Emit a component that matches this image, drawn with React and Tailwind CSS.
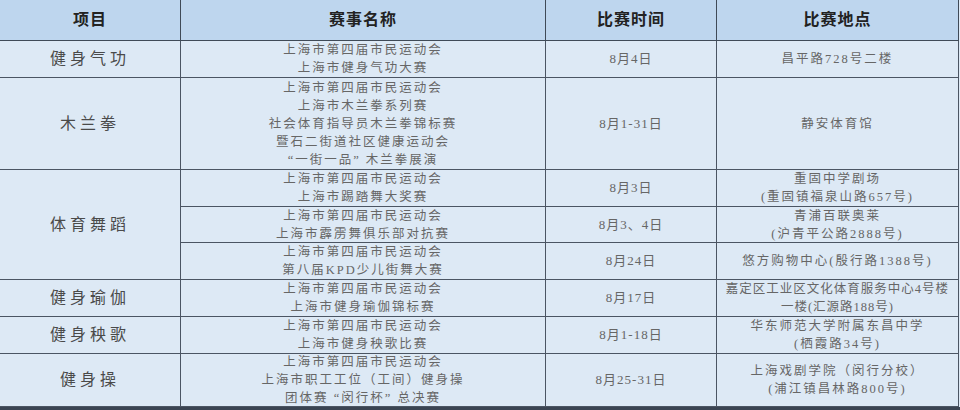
const font = { fontFamily: '"Liberation Serif", "Noto Sans CJK SC", serif' };

const rows = [
  { item: "健身气功", name: ["上海市第四届市民运动会", "上海市健身气功大赛"], date: "8月4日", place: ["昌平路728号二楼"], h: "h-[37px]" },
  {
    item: "木兰拳",
    name: ["上海市第四届市民运动会", "上海市木兰拳系列赛", "社会体育指导员木兰拳锦标赛", "暨石二街道社区健康运动会", "“一街一品” 木兰拳展演"],
    date: "8月1-31日",
    place: ["静安体育馆"],
    h: "h-[92px]",
  },
];

const dance = [
  { name: ["上海市第四届市民运动会", "上海市踢踏舞大奖赛"], date: "8月3日", place: ["重固中学剧场", "(重固镇福泉山路657号)"], h: "h-[37px]" },
  { name: ["上海市第四届市民运动会", "上海市霹雳舞俱乐部对抗赛"], date: "8月3、4日", place: ["青浦百联奥莱", "(沪青平公路2888号)"], h: "h-[36px]" },
  { name: ["上海市第四届市民运动会", "第八届KPD少儿街舞大赛"], date: "8月24日", place: ["悠方购物中心(殷行路1388号)"], h: "h-[37px]" },
];

const rest = [
  { item: "健身瑜伽", name: ["上海市第四届市民运动会", "上海市健身瑜伽锦标赛"], date: "8月17日", place: ["嘉定区工业区文化体育服务中心4号楼", "一楼(汇源路188号)"], h: "h-[37px]", tight: true },
  { item: "健身秧歌", name: ["上海市第四届市民运动会", "上海市健身秧歌比赛"], date: "8月1-18日", place: ["华东师范大学附属东昌中学", "(栖霞路34号)"], h: "h-[37px]" },
  { item: "健身操", name: ["上海市第四届市民运动会", "上海市职工工位（工间）健身操", "团体赛 “闵行杯” 总决赛"], date: "8月25-31日", place: ["上海戏剧学院（闵行分校）", "(浦江镇昌林路800号)"], h: "h-[53px]" },
];

function Lines({ items, tight }) {
  return (
    <div className={`flex flex-col items-center text-[12.5px] leading-[18px] text-[#666] ${tight ? "tracking-[1px]" : "tracking-[2px]"}`}>
      {items.map((t, i) => (
        <span key={i} className="whitespace-nowrap">{t}</span>
      ))}
    </div>
  );
}

const cell = "flex items-center justify-center border-r border-b border-[#4b5563]";
const itemCls = "text-[16px] tracking-[4px] text-[#4a4a4a]";

function Row({ r, withItem = true }) {
  return (
    <>
      {withItem && <div className={`${cell} ${r.h} ${itemCls}`}>{r.item}</div>}
      <div className={`${cell} ${r.h}`}><Lines items={r.name} /></div>
      <div className={`${cell} ${r.h} text-[13px] tracking-[1px] text-[#666]`}>{r.date}</div>
      <div className={`${cell} ${r.h}`}><Lines items={r.place} tight={r.tight} /></div>
    </>
  );
}

export default function App() {
  return (
    <div className="w-[960px] h-[410px] bg-[#dde9f5] overflow-hidden" style={font}>
      <div className="grid grid-cols-[181px_365px_171px_242px] border-b-[3px] border-[#3a4452]">
        {["项目", "赛事名称", "比赛时间", "比赛地点"].map((h) => (
          <div key={h} className="h-[41px] flex items-center justify-center bg-[#bed6ee] border-r border-b border-[#3f4a57] text-[16px] font-bold tracking-[1px] text-[#222]">
            {h}
          </div>
        ))}
        {rows.map((r) => <Row key={r.item} r={r} />)}
        <div className={`${cell} row-span-3 ${itemCls}`}>体育舞蹈</div>
        {dance.map((r, i) => <Row key={i} r={r} withItem={false} />)}
        {rest.map((r) => <Row key={r.item} r={r} />)}
      </div>
    </div>
  );
}
